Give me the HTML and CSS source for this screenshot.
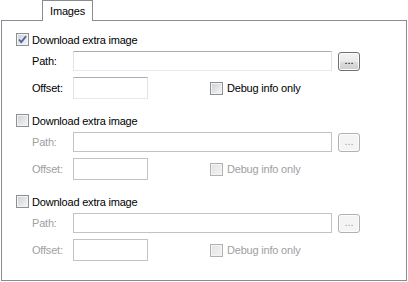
FILE: index.html
```html
<!DOCTYPE html>
<html lang="en">
<head>
    <meta charset="UTF-8">
    <title>Images</title>
    <link rel="stylesheet" href="styles.css">
</head>
<body>
    <div class="tabs">
        <div class="tab">Images</div>
    </div>

    <div class="panel">
        <div class="group">
            <label class="check-row">
                <span class="check checked">
                    <svg width="11" height="11" viewBox="0 0 11 11"><path d="M2 5.5 L4.3 8 L9 2.2" fill="none" stroke="#4a5fa0" stroke-width="1.8"/></svg>
                </span>
                <span>Download extra image</span>
            </label>
            <div class="field-row path-row">
                <span class="field-label">Path:</span>
                <div class="textbox path-box"></div>
                <button class="browse">...</button>
            </div>
            <div class="field-row offset-row">
                <span class="field-label">Offset:</span>
                <div class="textbox offset-box"></div>
                <label class="check-row debug">
                    <span class="check"></span>
                    <span>Debug info only</span>
                </label>
            </div>
        </div>

        <div class="group disabled">
            <label class="check-row">
                <span class="check"></span>
                <span>Download extra image</span>
            </label>
            <div class="field-row path-row">
                <span class="field-label">Path:</span>
                <div class="textbox path-box"></div>
                <button class="browse">...</button>
            </div>
            <div class="field-row offset-row">
                <span class="field-label">Offset:</span>
                <div class="textbox offset-box"></div>
                <label class="check-row debug">
                    <span class="check"></span>
                    <span>Debug info only</span>
                </label>
            </div>
        </div>

        <div class="group disabled">
            <label class="check-row">
                <span class="check"></span>
                <span>Download extra image</span>
            </label>
            <div class="field-row path-row">
                <span class="field-label">Path:</span>
                <div class="textbox path-box"></div>
                <button class="browse">...</button>
            </div>
            <div class="field-row offset-row">
                <span class="field-label">Offset:</span>
                <div class="textbox offset-box"></div>
                <label class="check-row debug">
                    <span class="check"></span>
                    <span>Debug info only</span>
                </label>
            </div>
        </div>
    </div>
</body>
</html>
```

FILE: styles.css
```css
* {
    margin: 0;
    padding: 0;
    box-sizing: border-box;
}

body {
    font-family: 'Liberation Sans', Arial, sans-serif;
    font-size: 11px;
    letter-spacing: -0.2px;
    color: #000;
    background: #fff;
    width: 408px;
    height: 282px;
    overflow: hidden;
}

/* Tab strip */
.tabs {
    display: flex;
    padding-left: 42px;
    height: 21px;
    position: relative;
    z-index: 1;
}

.tab {
    width: 51px;
    height: 21px;
    border: 1px solid #898c95;
    border-bottom: none;
    background: #fff;
    text-align: center;
    line-height: 18px;
    padding-top: 1px;
}

/* Page */
.panel {
    margin-top: -1px;
    margin-left: 1px;
    width: 406px;
    height: 261px;
    border: 1px solid #898c95;
    padding: 12px 0 0 14px;
    background: #fff;
}

.group {
    display: flex;
    flex-direction: column;
    margin-bottom: 15px;
}

.check-row {
    display: flex;
    align-items: center;
    height: 13px;
    gap: 3px;
    white-space: nowrap;
}

.check {
    width: 13px;
    height: 13px;
    flex-shrink: 0;
    border: 1px solid #8e8f8f;
    box-shadow: inset 0 0 0 1px #f4f4f4;
    background: linear-gradient(135deg, #cdd0d5, #f7f7f7);
    display: flex;
    align-items: center;
    justify-content: center;
}

.check svg {
    display: block;
}

.field-row {
    display: flex;
    align-items: center;
    padding-left: 16px;
}

.path-row {
    margin-top: 5px;
    height: 20px;
}

.offset-row {
    margin-top: 6px;
    height: 22px;
}

.field-label {
    width: 41px;
}

.textbox {
    height: 100%;
    border: 1px solid #e2e3ea;
    border-top-color: #abadb3;
    border-bottom-color: #e3e9ef;
    background: #fff;
}

.path-box {
    width: 259px;
}

.offset-box {
    width: 75px;
}

.browse {
    margin-left: 6px;
    width: 22px;
    height: 19px;
    font-family: inherit;
    font-size: 11px;
    line-height: 12px;
    padding-bottom: 3px;
    color: #000;
    border: 1px solid #707070;
    border-radius: 3px;
    background: linear-gradient(#f2f2f2 0%, #ebebeb 50%, #dddddd 51%, #cfcfcf 100%);
    box-shadow: inset 0 0 0 1px #fcfcfc;
}

.debug {
    margin-left: 62px;
    gap: 4px;
}

/* Disabled groups */
.disabled .field-label,
.disabled .debug {
    color: #a0a0a0;
}

.disabled .textbox {
    border-color: #c3c3c3;
}

.disabled .browse {
    color: #a0a0a0;
    border-color: #adb2b5;
    background: #f4f4f4;
}

.disabled .debug .check {
    border-color: #b1b1b1;
    background: linear-gradient(135deg, #e2e2e2, #f4f4f4);
}
```
